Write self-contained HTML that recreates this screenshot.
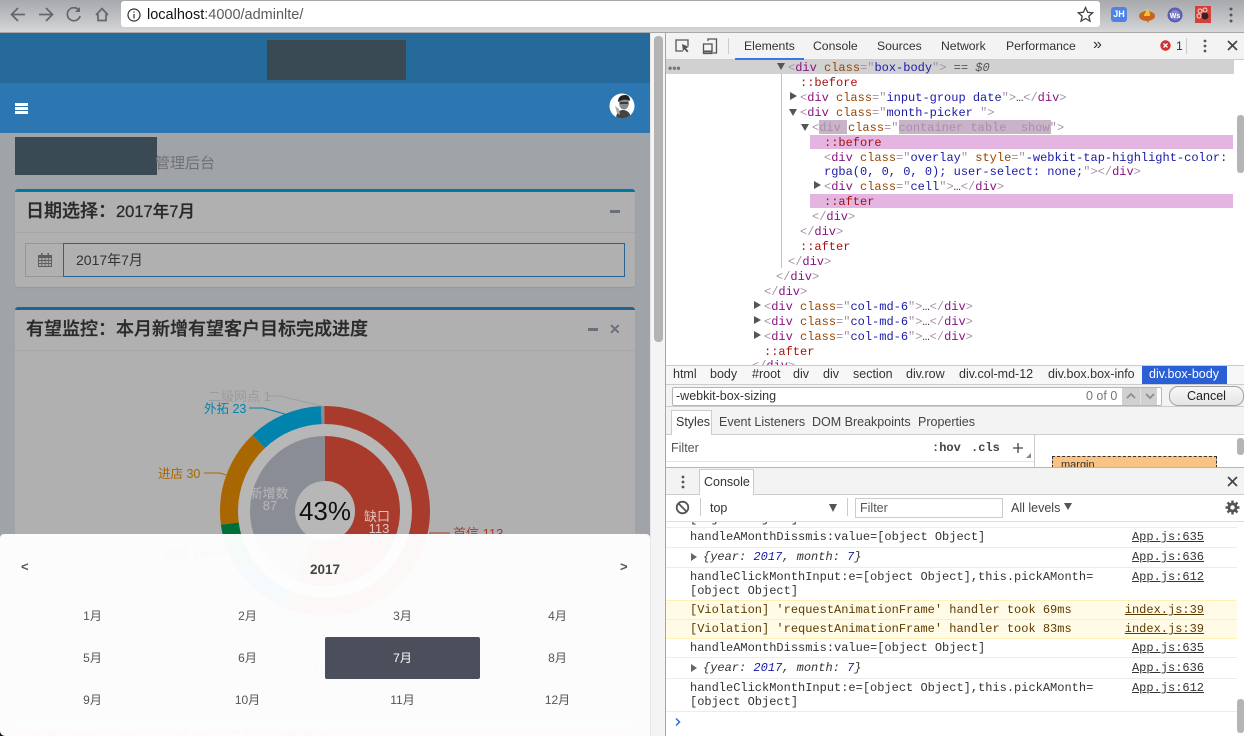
<!DOCTYPE html>
<html lang="zh">
<head>
<meta charset="utf-8">
<title>adminlte</title>
<style>
html,body{margin:0;padding:0;width:1244px;height:736px;overflow:hidden;background:#fff}
*{box-sizing:border-box}
body{font-family:"Liberation Sans","Noto Sans CJK SC",sans-serif;position:relative;filter:blur(.3px)}
.a{position:absolute}
.t{position:absolute;white-space:pre;line-height:16px}
.m{font-family:"Liberation Mono","Noto Sans CJK SC",monospace;font-size:12px;line-height:17px;position:absolute;white-space:pre;color:#333}
.g{color:#a98fa8}.p{color:#881280}.n{color:#994500}.v{color:#1a1aa6}.s{color:#a11}
.c{width:0;height:0;position:absolute}
.rt{border-left:7px solid #555;border-top:4.5px solid transparent;border-bottom:4.5px solid transparent}
.dn{border-top:7px solid #555;border-left:4.5px solid transparent;border-right:4.5px solid transparent}
.tab{position:absolute;font-size:12.2px;line-height:16px;color:#333;white-space:pre}
.lnk{position:absolute;right:40px;font-family:"Liberation Mono",monospace;font-size:12px;line-height:14px;color:#333;text-decoration:underline}
.cl{position:absolute;left:690px;font-family:"Liberation Mono",monospace;font-size:12px;line-height:14px;color:#333;white-space:pre}
.ln{position:absolute;left:666px;width:571px;height:1px;background:#ececec}
.mo{position:absolute;width:155px;text-align:center;font-size:12px;line-height:16px;color:#555}
.cr{position:absolute;font-size:12.5px;line-height:16px;color:#333;white-space:pre}
</style>
</head>
<body>

<!-- browser toolbar -->
<div class="a" style="left:0;top:0;width:1244px;height:33px;background:linear-gradient(#a7a9ad,#c2c3c6 60%,#d8d8d9);border-bottom:1px solid #a8a8a8"></div>
<svg class="a" style="left:0;top:0" width="125" height="33" fill="none" stroke="#646669" stroke-width="1.7">
<path d="M25 14.5H12M18 8l-6.500 6.500 6.500 6.500"/>
<path d="M39 14.500H52M46 8l6.500 6.500-6.500 6.500"/>
<path d="M79.500 11a6.500 6.500 0 1 0 .6 5"/><path d="M80 7v5h-5" fill="#646669" stroke="none"/>
<path d="M96 15l6-6.500 6 6.500M98 14v6.500h8V14"/>
</svg>
<div class="a" style="left:121px;top:1px;width:979px;height:26px;background:#fff;border-radius:3px"></div>
<svg class="a" style="left:126px;top:7px" width="16" height="16" fill="none" stroke="#333" stroke-width="1.200"><circle cx="8" cy="8" r="6"/><path d="M8 7v4.500M8 4.500v1.300"/></svg>
<div class="t" style="left:147px;top:7px;font-size:14.500px;color:#111">localhost<span style="color:#5c5c5c">:4000/adminlte/</span></div>
<svg class="a" style="left:1077px;top:6px" width="17" height="17" fill="none" stroke="#444" stroke-width="1.300"><path d="M8.500 1.500l2.100 4.800 5.100.5-3.900 3.400 1.200 5-4.500-2.700L4 15.200l1.200-5L1.300 6.800l5.100-.5z"/></svg>
<div class="a" style="left:1111px;top:7px;width:16px;height:15px;border-radius:3px;background:#4f82e6;color:#fff;font-size:9px;font-weight:bold;text-align:center;line-height:15px">JH</div>
<svg class="a" style="left:1138px;top:5px" width="18" height="19"><ellipse cx="9" cy="11" rx="8" ry="5" fill="#c9641c"/><path d="M6 11c0-3 3-4 3-8 2 2 3 5 3 8z" fill="#f3c23b"/><path d="M8 15l2 3 1-3z" fill="#c9641c"/></svg>
<svg class="a" style="left:1167px;top:7px" width="16" height="16"><circle cx="8" cy="8" r="7.500" fill="#5d5fb0"/><circle cx="8" cy="8" r="5" fill="#8486c9"/><text x="8" y="11" text-anchor="middle" font-size="7" font-family="Liberation Sans" font-weight="bold" fill="#fff">Ws</text></svg>
<svg class="a" style="left:1195px;top:6px" width="16" height="17"><rect width="16" height="17" fill="#d2423a"/><circle cx="5" cy="5" r="2" fill="none" stroke="#f5d4d0"/><circle cx="10" cy="4" r="2" fill="none" stroke="#f5d4d0"/><circle cx="4" cy="10" r="2" fill="none" stroke="#f5d4d0"/><circle cx="10" cy="10" r="3.500" fill="#3a2020"/></svg>
<svg class="a" style="left:1228px;top:7px" width="6" height="16" fill="#555"><circle cx="3" cy="2" r="1.500"/><circle cx="3" cy="8" r="1.500"/><circle cx="3" cy="14" r="1.500"/></svg>

<!-- left page -->
<div class="a" style="left:0;top:33px;width:650px;height:703px;background:#a0a3a8;overflow:hidden">
  <div class="a" style="left:0;top:0;width:650px;height:50px;background:#266a9b"></div>
  <div class="a" style="left:267px;top:7px;width:139px;height:40px;background:#394a55"></div>
  <div class="a" style="left:0;top:50px;width:650px;height:50px;background:#2c77b2"></div>
  <div class="a" style="left:15px;top:70px;width:13px;height:11px;background:linear-gradient(#fff 0 3px,transparent 3px 4px,#fff 4px 7px,transparent 7px 8px,#fff 8px)"></div>
  <svg class="a" style="left:609px;top:60px" width="26" height="26"><defs><clipPath id="av"><circle cx="13" cy="13" r="12.500"/></clipPath></defs><g clip-path="url(#av)"><rect width="26" height="26" fill="#fff"/><path d="M7 26c0-6 3-9 7-9s8 3 8 9z" fill="#444"/><ellipse cx="15" cy="10" rx="5" ry="6.500" fill="#888"/><path d="M9 9c0-5 3-7 7-7s5 3 5 6c-3-2-8-2-12 1z" fill="#222"/><path d="M11 10h8" stroke="#222" stroke-width="1.500"/><path d="M6 13l2 7 3 2-1-6z" fill="#aaa"/></g></svg>

  <div class="a" style="left:15px;top:104px;width:142px;height:38px;background:#394a55"></div>
  <div class="t" style="left:155px;top:121px;font-size:15px;line-height:20px;color:#6e7175">管理后台</div>

  <!-- box 1 -->
  <div class="a" style="left:15px;top:156px;width:620px;height:98px;background:#b0b0b0;border-top:3px solid #00789f;border-radius:3px;box-shadow:0 1px 1px rgba(0,0,0,.08)"></div>
  <div class="a" style="left:15px;top:199px;width:620px;height:1px;background:#a6a6a6"></div>
  <div class="t" style="left:26px;top:168px;font-size:18px;line-height:20px;color:#2a2a2a;font-weight:500;-webkit-text-stroke:.3px #2a2a2a">日期选择：<span style="font-size:16.500px">2017年7月</span></div>
  <div class="a" style="left:610px;top:177px;width:10px;height:3px;background:#6a6f7c"></div>
  <div class="a" style="left:25px;top:210px;width:39px;height:34px;border:1px solid #939598;border-right:0"></div>
  <svg class="a" style="left:38px;top:220px" width="14" height="14" fill="#5e5e5e"><path d="M0 2h14v12H0z"/><path d="M3 0h1.500v3H3zM9.500 0H11v3H9.500z"/><path d="M1 5h2.500v2H1zM4.300 5h2.500v2H4.300zM7.500 5H10v2H7.500zM10.700 5H13v2h-2.300zM1 8h2.500v2H1zM4.300 8h2.500v2H4.300zM7.500 8H10v2H7.500zM10.700 8H13v2h-2.300zM1 11h2.500v2H1zM4.300 11h2.500v2H4.300zM7.500 11H10v2H7.500zM10.700 11H13v2h-2.300z" fill="#aaa"/></svg>
  <div class="a" style="left:63px;top:210px;width:562px;height:34px;border:1px solid #28648f"></div>
  <div class="t" style="left:76px;top:219px;font-size:14px;color:#333">2017年7月</div>

  <!-- box 2 -->
  <div class="a" style="left:15px;top:274px;width:620px;height:420px;background:#b0b0b0;border-top:3px solid #1f6491;border-radius:3px"></div>
  <div class="a" style="left:15px;top:317px;width:620px;height:1px;background:#a6a6a6"></div>
  <div class="t" style="left:26px;top:286px;font-size:18px;line-height:20px;color:#2a2a2a;font-weight:500;-webkit-text-stroke:.3px #2a2a2a">有望监控：本月新增有望客户目标完成进度</div>
  <div class="a" style="left:588px;top:295px;width:10px;height:3px;background:#6a6f7c"></div>
  <div class="t" style="left:609px;top:288px;font-size:14px;font-weight:bold;color:#6a6f7c">✕</div>

  <!-- chart -->
  <svg class="a" style="left:0;top:-33px" width="650" height="769">
    <circle cx="325" cy="511" r="88" fill="#b7b7b7"/>
    <g fill="none" transform="rotate(-90 325 511)">
      <g stroke-width="18">
        <circle cx="325" cy="511" r="96" pathLength="200" stroke="#a93b2d" stroke-dasharray="113 87"/>
        <circle cx="325" cy="511" r="96" pathLength="200" stroke="#2f6fae" stroke-dasharray="17 183" stroke-dashoffset="-113"/>
        <circle cx="325" cy="511" r="96" pathLength="200" stroke="#006f38" stroke-dasharray="16 184" stroke-dashoffset="-130"/>
        <circle cx="325" cy="511" r="96" pathLength="200" stroke="#a86700" stroke-dasharray="30 170" stroke-dashoffset="-146"/>
        <circle cx="325" cy="511" r="96" pathLength="200" stroke="#0084ae" stroke-dasharray="23 177" stroke-dashoffset="-176"/>
        <circle cx="325" cy="511" r="96" pathLength="200" stroke="#8a8d96" stroke-dasharray="1 199" stroke-dashoffset="-199"/>
      </g>
      <g stroke-width="45">
        <circle cx="325" cy="511" r="52.500" pathLength="200" stroke="#a93b2d" stroke-dasharray="113 87"/>
        <circle cx="325" cy="511" r="52.500" pathLength="200" stroke="#8a8d96" stroke-dasharray="87 113" stroke-dashoffset="-113"/>
      </g>
    </g>
    <g fill="none" stroke-width="1">
      <path d="M268 396h12l42 10" stroke="#9a9da2"/>
      <path d="M249 408h14l22 6" stroke="#0084ae"/>
      <path d="M204 473h16l6 2" stroke="#a86700"/>
      <path d="M429 533h21" stroke="#a93b2d"/>
      <path d="M205 553h14l7 -3" stroke="#006f38"/>
      <path d="M236 600h14l6 -4" stroke="#2f6fae"/>
    </g>
    <g font-family="Liberation Sans,Noto Sans CJK SC,sans-serif" font-size="13">
      <text x="208" y="401" fill="#989ba0">二级网点 1</text>
      <text x="204" y="413" fill="#0084ae" font-size="12.500">外拓 23</text>
      <text x="158" y="478" fill="#a86700" font-size="12.500">进店 30</text>
      <text x="453" y="538" fill="#a93b2d">首信 113</text>
      <text x="163" y="558" fill="#006f38">电话 16</text>
      <text x="190" y="605" fill="#2f6fae">DCC 17</text>
      <text x="269" y="498" fill="#b8b8bb" text-anchor="middle">新增数</text>
      <text x="270" y="510" fill="#b8b8bb" text-anchor="middle">87</text>
      <text x="377" y="521" fill="#e2c4bd" text-anchor="middle">缺口</text>
      <text x="379" y="533" fill="#e2c4bd" text-anchor="middle">113</text>
      <text x="325" y="520" fill="#111" text-anchor="middle" font-size="26">43%</text>
      <text x="282" y="677" fill="#777" font-size="15">月目标</text>
    </g>
    <rect x="325" y="679" width="30" height="4" fill="#6f93bd"/>
  </svg>

  <!-- third box -->
  <div class="a" style="left:15px;top:687px;width:620px;height:40px;background:#b0b0b0;border-top:3px solid #7ccdae"></div>
  <div class="t" style="left:27px;top:697px;font-size:18px;line-height:20px;color:#555">有望监控：本月新增进店目标完成进度</div>

  <!-- popup -->
  <div class="a" style="left:0;top:501px;width:650px;height:202px;background:rgba(255,255,255,.965);border-radius:4px 4px 0 0">
    <div class="t" style="left:21px;top:25px;font-size:13px;font-weight:bold;color:#555">&lt;</div>
    <div class="t" style="left:620px;top:25px;font-size:13px;font-weight:bold;color:#555">&gt;</div>
    <div class="t" style="left:0;width:650px;text-align:center;top:28px;font-size:13.500px;font-weight:bold;color:#444">2017</div>
    <div class="a" style="left:325px;top:103px;width:155px;height:42px;background:#4a4f5b;border-radius:2px"></div>
    <div class="mo" style="left:15px;top:74px">1月</div><div class="mo" style="left:170px;top:74px">2月</div><div class="mo" style="left:325px;top:74px">3月</div><div class="mo" style="left:480px;top:74px">4月</div>
    <div class="mo" style="left:15px;top:116px">5月</div><div class="mo" style="left:170px;top:116px">6月</div><div class="mo" style="left:325px;top:116px;color:#fff">7月</div><div class="mo" style="left:480px;top:116px">8月</div>
    <div class="mo" style="left:15px;top:158px">9月</div><div class="mo" style="left:170px;top:158px">10月</div><div class="mo" style="left:325px;top:158px">11月</div><div class="mo" style="left:480px;top:158px">12月</div>
  </div>
</div>
<svg class="a" style="left:0;top:730px" width="6" height="6"><path d="M0 1v5h5A5 5 0 0 1 0 1z" fill="#111"/></svg>

<!-- scrollbar -->
<div class="a" style="left:650px;top:33px;width:15px;height:703px;background:#f4f4f4;border-left:1px solid #e6e6e6"></div>
<div class="a" style="left:654px;top:36px;width:9px;height:306px;background:#b3b3b3;border-radius:4px"></div>
<div class="a" style="left:665px;top:33px;width:1px;height:703px;background:#a6a6a6"></div>

<!-- devtools tabbar -->
<div class="a" style="left:666px;top:33px;width:578px;height:27px;background:#f3f3f3;border-bottom:1px solid #ccc"></div>
<svg class="a" style="left:674px;top:38px" width="48" height="17" fill="none" stroke="#555" stroke-width="1.300">
<path d="M9 13H2V2h12v6"/><path d="M8 6l7 3-3 1.200 2.500 3-1.500 1.200-2.500-3L9 13z" fill="#555" stroke="none"/>
<path d="M34 3V1h8.500v14H39"/><rect x="29.500" y="6" width="8.500" height="9.500"/><path d="M29.500 13.500h8.500" stroke-width="2"/>
</svg>
<div class="a" style="left:728px;top:38px;width:1px;height:16px;background:#ccc"></div>
<div class="tab" style="left:744px;top:38px">Elements</div>
<div class="a" style="left:735px;top:58px;width:69px;height:2px;background:#3b78e7"></div>
<div class="tab" style="left:813px;top:38px">Console</div>
<div class="tab" style="left:877px;top:38px">Sources</div>
<div class="tab" style="left:941px;top:38px">Network</div>
<div class="tab" style="left:1006px;top:38px">Performance</div>
<div class="tab" style="left:1093px;top:37px;font-size:16px">»</div>
<svg class="a" style="left:1160px;top:40px" width="11" height="11"><circle cx="5.500" cy="5.500" r="5.200" fill="#d92c2c"/><path d="M3.500 3.500l4 4M7.500 3.500l-4 4" stroke="#fff" stroke-width="1.300"/></svg>
<div class="tab" style="left:1176px;top:38px">1</div>
<div class="a" style="left:1186px;top:38px;width:1px;height:16px;background:#ccc"></div>
<svg class="a" style="left:1202px;top:39px" width="6" height="14" fill="#555"><circle cx="3" cy="2" r="1.400"/><circle cx="3" cy="7" r="1.400"/><circle cx="3" cy="12" r="1.400"/></svg>
<svg class="a" style="left:1227px;top:40px" width="11" height="11" stroke="#444" stroke-width="1.700"><path d="M1 1l9 9M10 1l-9 9"/></svg>

<!-- elements tree -->
<div class="a" style="left:666px;top:60px;width:568px;height:14px;background:#d1d1d1"></div>
<div class="t" style="left:668px;top:60px;font-size:12px;font-weight:bold;color:#777;letter-spacing:0">•••</div>
<div class="a" style="left:810px;top:135px;width:423px;height:14px;background:#e3b5e0"></div>
<div class="a" style="left:810px;top:194px;width:423px;height:14px;background:#e3b5e0"></div>
<div class="a" style="left:781px;top:74px;width:1px;height:194px;background:#a8c6ee"></div>
<div class="a" style="left:819px;top:120px;width:28px;height:14px;background:#c9b3c8"></div>
<div class="a" style="left:899px;top:120px;width:152px;height:14px;background:#c9b3c8"></div>

<div class="c dn" style="left:777px;top:63px"></div>
<div class="m" style="left:788px;top:60px"><span class="g">&lt;</span><span class="p">div</span> <span class="n">class</span><span class="g">="</span><span class="v">box-body</span><span class="g">"&gt;</span> <span style="color:#555">== <i>$0</i></span></div>
<div class="m s" style="left:800px;top:75px">::before</div>
<div class="c rt" style="left:790px;top:92px"></div>
<div class="m" style="left:800px;top:90px"><span class="g">&lt;</span><span class="p">div</span> <span class="n">class</span><span class="g">="</span><span class="v">input-group date</span><span class="g">"&gt;</span>…<span class="g">&lt;/</span><span class="p">div</span><span class="g">&gt;</span></div>
<div class="c dn" style="left:789px;top:109px"></div>
<div class="m" style="left:800px;top:105px"><span class="g">&lt;</span><span class="p">div</span> <span class="n">class</span><span class="g">="</span><span class="v">month-picker </span><span class="g">"&gt;</span></div>
<div class="c dn" style="left:801px;top:124px"></div>
<div class="m" style="left:812px;top:120px"><span class="g">&lt;</span><span class="g">div</span> <span class="n">class</span><span class="g">="</span><span class="g">container table  show</span><span class="g">"&gt;</span></div>
<div class="m s" style="left:824px;top:135px">::before</div>
<div class="m" style="left:824px;top:150px"><span class="g">&lt;</span><span class="p">div</span> <span class="n">class</span><span class="g">="</span><span class="v">overlay</span><span class="g">"</span> <span class="n">style</span><span class="g">="</span><span class="v">-webkit-tap-highlight-color:</span></div>
<div class="m" style="left:824px;top:164px"><span class="v">rgba(0, 0, 0, 0); user-select: none;</span><span class="g">"&gt;&lt;/</span><span class="p">div</span><span class="g">&gt;</span></div>
<div class="c rt" style="left:814px;top:181px"></div>
<div class="m" style="left:824px;top:179px"><span class="g">&lt;</span><span class="p">div</span> <span class="n">class</span><span class="g">="</span><span class="v">cell</span><span class="g">"&gt;</span>…<span class="g">&lt;/</span><span class="p">div</span><span class="g">&gt;</span></div>
<div class="m s" style="left:824px;top:194px">::after</div>
<div class="m" style="left:812px;top:209px"><span class="g">&lt;/</span><span class="p">div</span><span class="g">&gt;</span></div>
<div class="m" style="left:800px;top:224px"><span class="g">&lt;/</span><span class="p">div</span><span class="g">&gt;</span></div>
<div class="m s" style="left:800px;top:239px">::after</div>
<div class="m" style="left:788px;top:254px"><span class="g">&lt;/</span><span class="p">div</span><span class="g">&gt;</span></div>
<div class="m" style="left:776px;top:269px"><span class="g">&lt;/</span><span class="p">div</span><span class="g">&gt;</span></div>
<div class="m" style="left:764px;top:284px"><span class="g">&lt;/</span><span class="p">div</span><span class="g">&gt;</span></div>
<div class="c rt" style="left:754px;top:301px"></div>
<div class="m" style="left:764px;top:299px"><span class="g">&lt;</span><span class="p">div</span> <span class="n">class</span><span class="g">="</span><span class="v">col-md-6</span><span class="g">"&gt;</span>…<span class="g">&lt;/</span><span class="p">div</span><span class="g">&gt;</span></div>
<div class="c rt" style="left:754px;top:316px"></div>
<div class="m" style="left:764px;top:314px"><span class="g">&lt;</span><span class="p">div</span> <span class="n">class</span><span class="g">="</span><span class="v">col-md-6</span><span class="g">"&gt;</span>…<span class="g">&lt;/</span><span class="p">div</span><span class="g">&gt;</span></div>
<div class="c rt" style="left:754px;top:331px"></div>
<div class="m" style="left:764px;top:329px"><span class="g">&lt;</span><span class="p">div</span> <span class="n">class</span><span class="g">="</span><span class="v">col-md-6</span><span class="g">"&gt;</span>…<span class="g">&lt;/</span><span class="p">div</span><span class="g">&gt;</span></div>
<div class="m s" style="left:764px;top:344px">::after</div>
<div class="m" style="left:752px;top:358px;height:7px;overflow:hidden"><span class="g">&lt;/</span><span class="p">div</span><span class="g">&gt;</span></div>
<div class="a" style="left:1237px;top:115px;width:7px;height:58px;background:#b5b5b5;border-radius:3px"></div>

<!-- breadcrumb -->
<div class="a" style="left:666px;top:365px;width:578px;height:20px;background:#f7f7f7;border-top:1px solid #ccc;border-bottom:1px solid #ccc"></div>
<div class="a" style="left:1142px;top:366px;width:85px;height:18px;background:#2a5fd6"></div>
<div class="cr" style="left:673px;top:366px">html</div>
<div class="cr" style="left:710px;top:366px">body</div>
<div class="cr" style="left:752px;top:366px">#root</div>
<div class="cr" style="left:793px;top:366px">div</div>
<div class="cr" style="left:823px;top:366px">div</div>
<div class="cr" style="left:853px;top:366px">section</div>
<div class="cr" style="left:906px;top:366px">div.row</div>
<div class="cr" style="left:959px;top:366px">div.col-md-12</div>
<div class="cr" style="left:1048px;top:366px">div.box.box-info</div>
<div class="cr" style="left:1149px;top:366px;color:#fff">div.box-body</div>

<!-- search -->
<div class="a" style="left:666px;top:385px;width:578px;height:22px;background:#f3f3f3;border-bottom:1px solid #ccc"></div>
<div class="a" style="left:672px;top:387px;width:490px;height:19px;background:#fff;border:1px solid #b5b5b5;border-radius:2px"></div>
<div class="cr" style="left:676px;top:388px">-webkit-box-sizing</div>
<div class="cr" style="left:1086px;top:388px;color:#777">0 of 0</div>
<div class="a" style="left:1122px;top:388px;width:35px;height:17px;background:#d0d0d0"></div>
<div class="a" style="left:1140px;top:388px;width:1px;height:17px;background:#e2e2e2"></div>
<svg class="a" style="left:1124px;top:391px" width="34" height="10" fill="none" stroke="#8d8d8d" stroke-width="1.800"><path d="M3 7l4-4 4 4M22 3l4 4 4-4"/></svg>
<div class="a" style="left:1169px;top:386px;width:75px;height:20px;border:1px solid #a2a2a2;border-radius:9px;background:linear-gradient(#f7f7f7,#e4e4e4);text-align:center;font-size:12.500px;line-height:18px;color:#222">Cancel</div>

<!-- styles tabs -->
<div class="a" style="left:666px;top:407px;width:578px;height:28px;background:#f3f3f3;border-bottom:1px solid #ccc"></div>
<div class="a" style="left:671px;top:410px;width:41px;height:26px;background:#fff;border:1px solid #ccc;border-bottom:0"></div>
<div class="cr" style="left:676px;top:414px">Styles</div>
<div class="cr" style="left:719px;top:414px;color:#444">Event Listeners</div>
<div class="cr" style="left:812px;top:414px;color:#444">DOM Breakpoints</div>
<div class="cr" style="left:918px;top:414px;color:#444">Properties</div>
<div class="a" style="left:666px;top:435px;width:368px;height:32px;background:#fff"></div>
<div class="cr" style="left:671px;top:440px;color:#555">Filter</div>
<div class="m" style="left:932px;top:440px;font-weight:bold;color:#444">:hov</div>
<div class="m" style="left:971px;top:440px;font-weight:bold;color:#444">.cls</div>
<svg class="a" style="left:1012px;top:442px" width="12" height="12" stroke="#444" stroke-width="1.300"><path d="M6 1v10M1 6h10"/></svg>
<div class="c" style="left:1026px;top:453px;border-bottom:5px solid #888;border-left:5px solid transparent"></div>
<div class="a" style="left:666px;top:461px;width:368px;height:1px;background:#e4e4e4"></div>
<div class="a" style="left:1034px;top:435px;width:1px;height:32px;background:#ccc"></div>
<div class="a" style="left:1052px;top:456px;width:165px;height:12px;background:#f9c384;border:1px dashed #333;border-bottom:0;overflow:hidden;font-size:11px;line-height:17px;padding-left:8px;color:#333">margin</div>
<div class="a" style="left:1237px;top:438px;width:7px;height:17px;background:#b5b5b5;border-radius:3px"></div>

<!-- console drawer -->
<div class="a" style="left:666px;top:467px;width:578px;height:28px;background:#f3f3f3;border-top:1px solid #b5b5b5;border-bottom:1px solid #ccc"></div>
<svg class="a" style="left:680px;top:475px" width="6" height="14" fill="#555"><circle cx="3" cy="2" r="1.400"/><circle cx="3" cy="7" r="1.400"/><circle cx="3" cy="12" r="1.400"/></svg>
<div class="a" style="left:699px;top:469px;width:55px;height:26px;background:#fff;border:1px solid #ccc;border-bottom:0"></div>
<div class="cr" style="left:704px;top:474px">Console</div>
<svg class="a" style="left:1227px;top:476px" width="11" height="11" stroke="#444" stroke-width="1.700"><path d="M1 1l9 9M10 1l-9 9"/></svg>

<div class="a" style="left:666px;top:495px;width:578px;height:27px;background:#fff;border-bottom:1px solid #ddd"></div>
<svg class="a" style="left:675px;top:500px" width="15" height="15" fill="none" stroke="#555" stroke-width="1.800"><circle cx="7.500" cy="7.500" r="5.800"/><path d="M3.500 3.500l8 8"/></svg>
<div class="a" style="left:700px;top:498px;width:1px;height:18px;background:#ccc"></div>
<div class="cr" style="left:710px;top:500px">top</div>
<div class="c dn" style="left:829px;top:504px;border-top-width:8px;border-left-width:4.500px;border-right-width:4.500px"></div>
<div class="a" style="left:847px;top:498px;width:1px;height:18px;background:#ccc"></div>
<div class="a" style="left:855px;top:498px;width:148px;height:20px;background:#fff;border:1px solid #ccc"></div>
<div class="cr" style="left:860px;top:500px;color:#555">Filter</div>
<div class="cr" style="left:1011px;top:500px;color:#444">All levels</div>
<div class="c dn" style="left:1064px;top:503px;border-top-width:7px"></div>
<svg class="a" style="left:1225px;top:500px" width="15" height="15"><path d="M7.500 .5v14M.5 7.500h14M2.500 2.500l10 10M12.500 2.500l-10 10" stroke="#555" stroke-width="2.400"/><circle cx="7.500" cy="7.500" r="5" fill="#555"/><circle cx="7.500" cy="7.500" r="2.200" fill="#fff"/></svg>

<!-- console rows -->
<div class="a" style="left:666px;top:522px;width:571px;height:214px;background:#fff;overflow:hidden">
  <div style="position:absolute;left:24px;top:-10px;font-family:'Liberation Mono',monospace;font-size:12px;line-height:15px;color:#333">[object Object]</div>
</div>
<div class="ln" style="top:527px"></div>
<div class="a" style="left:666px;top:522px;width:571px;height:5px;background:transparent"></div>
<div class="ln" style="top:547px"></div>
<div class="ln" style="top:567px"></div>
<div class="a" style="left:666px;top:600px;width:571px;height:39px;background:#fffbe6;border-top:1px solid #fff0b8;border-bottom:1px solid #fff0b8"></div>
<div class="a" style="left:666px;top:619px;width:571px;height:1px;background:#fff0b8"></div>
<div class="ln" style="top:657px"></div>
<div class="ln" style="top:678px"></div>
<div class="ln" style="top:711px"></div>

<div class="cl" style="top:530px">handleAMonthDissmis:value=[object Object]</div>
<div class="lnk" style="top:530px">App.js:635</div>
<div class="c rt" style="left:691px;top:553px;border-left-color:#666;border-left-width:6px;border-top-width:4px;border-bottom-width:4px"></div>
<div class="cl" style="left:703px;top:550px"><i>{year: <b style="color:#1a1aa6;font-weight:normal">2017</b>, month: <b style="color:#1a1aa6;font-weight:normal">7</b>}</i></div>
<div class="lnk" style="top:550px">App.js:636</div>
<div class="cl" style="top:570px">handleClickMonthInput:e=[object Object],this.pickAMonth=
[object Object]</div>
<div class="lnk" style="top:570px">App.js:612</div>
<div class="cl" style="top:603px;color:#5c3c00">[Violation] 'requestAnimationFrame' handler took 69ms</div>
<div class="lnk" style="top:603px;color:#5c3c00">index.js:39</div>
<div class="cl" style="top:622px;color:#5c3c00">[Violation] 'requestAnimationFrame' handler took 83ms</div>
<div class="lnk" style="top:622px;color:#5c3c00">index.js:39</div>
<div class="cl" style="top:641px">handleAMonthDissmis:value=[object Object]</div>
<div class="lnk" style="top:641px">App.js:635</div>
<div class="c rt" style="left:691px;top:664px;border-left-color:#666;border-left-width:6px;border-top-width:4px;border-bottom-width:4px"></div>
<div class="cl" style="left:703px;top:661px"><i>{year: <b style="color:#1a1aa6;font-weight:normal">2017</b>, month: <b style="color:#1a1aa6;font-weight:normal">7</b>}</i></div>
<div class="lnk" style="top:661px">App.js:636</div>
<div class="cl" style="top:681px">handleClickMonthInput:e=[object Object],this.pickAMonth=
[object Object]</div>
<div class="lnk" style="top:681px">App.js:612</div>
<svg class="a" style="left:674px;top:717px" width="8" height="10" fill="none" stroke="#2a6fdb" stroke-width="1.500"><path d="M2 1.500l3.500 3.500L2 8.500"/></svg>
<div class="a" style="left:1237px;top:699px;width:7px;height:34px;background:#b5b5b5;border-radius:3px"></div>

</body>
</html>
